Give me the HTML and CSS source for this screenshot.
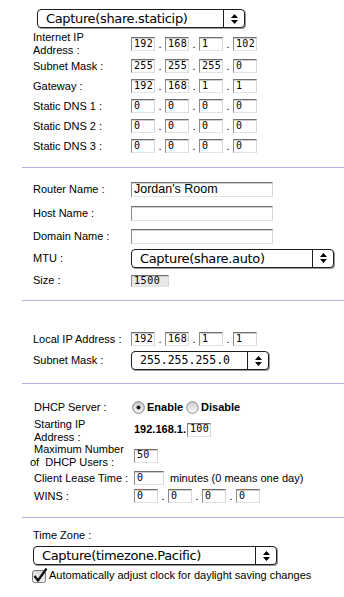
FILE: index.html
```html
<!doctype html>
<html>
<head>
<link rel="stylesheet" href="styles.css">
</head>
<body>

<div class="sec first">
	<div class="popup top-sel"><span class="val">Capture(share.staticip)</span><span class="arr"><svg width="7" height="10" viewBox="0 0 7 10"><polygon points="0,4 3.5,0 7,4"/><polygon points="0,6 3.5,10 7,6"/></svg></span></div>
	<div class="row h24 gap4">
		<div class="lbl">Internet IP<br>Address :</div>
		<div class="ip"><input class="oct" value="192"><span class="dot">.</span><input class="oct" value="168"><span class="dot">.</span><input class="oct" value="1"><span class="dot">.</span><input class="oct" value="102"></div>
	</div>
	<div class="row">
		<div class="lbl">Subnet Mask :</div>
		<div class="ip"><input class="oct" value="255"><span class="dot">.</span><input class="oct" value="255"><span class="dot">.</span><input class="oct" value="255"><span class="dot">.</span><input class="oct" value="0"></div>
	</div>
	<div class="row">
		<div class="lbl">Gateway :</div>
		<div class="ip"><input class="oct" value="192"><span class="dot">.</span><input class="oct" value="168"><span class="dot">.</span><input class="oct" value="1"><span class="dot">.</span><input class="oct" value="1"></div>
	</div>
	<div class="row">
		<div class="lbl">Static DNS 1 :</div>
		<div class="ip"><input class="oct" value="0"><span class="dot">.</span><input class="oct" value="0"><span class="dot">.</span><input class="oct" value="0"><span class="dot">.</span><input class="oct" value="0"></div>
	</div>
	<div class="row">
		<div class="lbl">Static DNS 2 :</div>
		<div class="ip"><input class="oct" value="0"><span class="dot">.</span><input class="oct" value="0"><span class="dot">.</span><input class="oct" value="0"><span class="dot">.</span><input class="oct" value="0"></div>
	</div>
	<div class="row">
		<div class="lbl">Static DNS 3 :</div>
		<div class="ip"><input class="oct" value="0"><span class="dot">.</span><input class="oct" value="0"><span class="dot">.</span><input class="oct" value="0"><span class="dot">.</span><input class="oct" value="0"></div>
	</div>
</div>

<div class="sec names">
	<div class="row h24">
		<div class="lbl">Router Name :</div>
		<input class="txt" value="Jordan's Room">
	</div>
	<div class="row h25">
		<div class="lbl">Host Name :</div>
		<input class="txt" value="">
	</div>
	<div class="row">
		<div class="lbl">Domain Name :</div>
		<input class="txt" value="">
	</div>
	<div class="row h24">
		<div class="lbl">MTU :</div>
		<div class="popup mtu-sel"><span class="val">Capture(share.auto)</span><span class="arr"><svg width="7" height="10" viewBox="0 0 7 10"><polygon points="0,4 3.5,0 7,4"/><polygon points="0,6 3.5,10 7,6"/></svg></span></div>
	</div>
	<div class="row h21">
		<div class="lbl">Size :</div>
		<input class="size" value="1500" readonly>
	</div>
</div>

<div class="sec lan">
	<div class="row">
		<div class="lbl">Local IP Address :</div>
		<div class="ip"><input class="oct" value="192"><span class="dot">.</span><input class="oct" value="168"><span class="dot">.</span><input class="oct" value="1"><span class="dot">.</span><input class="oct" value="1"></div>
	</div>
	<div class="row h23">
		<div class="lbl">Subnet Mask :</div>
		<div class="popup mask-sel"><span class="val mono">255.255.255.0</span><span class="arr"><svg width="7" height="10" viewBox="0 0 7 10"><polygon points="0,4 3.5,0 7,4"/><polygon points="0,6 3.5,10 7,6"/></svg></span></div>
	</div>
</div>

<div class="sec dhcp">
	<div class="row h22">
		<div class="lbl">DHCP Server :</div>
		<div class="radios">
			<span class="radio"><svg width="13" height="13" viewBox="0 0 13 13"><defs><linearGradient id="rg" x1="0" y1="0" x2="0" y2="1"><stop offset="0" stop-color="#c9c9c9"/><stop offset="1" stop-color="#fdfdfd"/></linearGradient></defs><circle cx="6.5" cy="6.5" r="5.8" fill="url(#rg)" stroke="#7d7d7d"/><circle cx="6.5" cy="6.5" r="2" fill="#111"/></svg></span><b>Enable</b>
			<span class="radio off"><svg width="13" height="13" viewBox="0 0 13 13"><circle cx="6.5" cy="6.5" r="5.8" fill="url(#rg)" stroke="#8a8a8a"/></svg></span><b>Disable</b>
		</div>
	</div>
	<div class="row h25">
		<div class="lbl two">Starting IP<br>Address :</div>
		<div class="start"><b>192.168.1.</b><input class="oct" value="100"></div>
	</div>
	<div class="row h25">
		<div class="lbl two">Maximum Number<br><span class="out">of&nbsp; DHCP Users :</span></div>
		<input class="oct" value="50">
	</div>
	<div class="row">
		<div class="lbl">Client Lease Time :</div>
		<input class="oct lease" value="0"><span class="note">minutes (0 means one day)</span>
	</div>
	<div class="row h16">
		<div class="lbl">WINS :</div>
		<div class="ip"><input class="oct" value="0"><span class="dot">.</span><input class="oct" value="0"><span class="dot">.</span><input class="oct" value="0"><span class="dot">.</span><input class="oct" value="0"></div>
	</div>
</div>

<div class="sec zone">
	<div class="zlbl">Time Zone :</div>
	<div class="popup tz-sel"><span class="val">Capture(timezone.Pacific)</span><span class="arr"><svg width="7" height="10" viewBox="0 0 7 10"><polygon points="0,4 3.5,0 7,4"/><polygon points="0,6 3.5,10 7,6"/></svg></span></div>
	<div class="check">
		<svg width="16" height="15" viewBox="0 0 16 15"><defs><linearGradient id="cg" x1="0" y1="0" x2="0" y2="1"><stop offset="0" stop-color="#d6d6d6"/><stop offset="1" stop-color="#f4f4f4"/></linearGradient></defs><rect x="0.5" y="2.5" width="13" height="12" rx="2" fill="url(#cg)" stroke="#7a7a7a"/><path d="M2.5 8 L6 12.5 L14.5 0.5" fill="none" stroke="#111" stroke-width="2.3" stroke-linejoin="round"/></svg>
		<span>Automatically adjust clock for daylight saving changes</span>
	</div>
</div>

</body>
</html>
```
FILE: styles.css
```css
body{
	margin:0px;
	padding:0px;
	background:#fff;
	color:#000;
	font:11px/13px "Liberation Sans", Arial, sans-serif;
	width:344px;
}

.sec{
	margin-left:22px;
	border-top:1px solid #b3b3de;
}
.first{
	border-top:none;
	padding:9px 0 11px;
}
.names{
	padding:9px 0 9px;
}
.lan{
	padding:28px 0 11px;
}
.dhcp{
	padding:12px 0 13px;
}
.zone{
	padding:11px 0 14px;
}

.row{
	display:flex;
	align-items:center;
	height:20px;
	padding-left:11px;
}
.h16{height:16px;}
.h21{height:21px;}
.h22{height:22px;}
.h23{height:23px;}
.h24{height:24px;}
.h25{height:25px;}
.gap4{margin-top:4px;}

.lbl{
	width:98px;
	flex:none;
	white-space:nowrap;
}
.dhcp .lbl{
	width:100px;
	padding-left:1px;
}
.lbl.two{
	line-height:12.5px;
}
.lbl .out{
	margin-left:-4px;
}

.ip{
	display:flex;
	align-items:center;
}
.dot{
	width:10px;
	text-align:center;
	line-height:14px;
}

input{
	margin:0;
	box-sizing:border-box;
	border-style:solid;
	border-width:1px;
	border-color:#6f6f6f #d6d6d6 #e2e2e2 #8c8c8c;
	box-shadow:inset 0 1px 0 #cfcfcf;
	background:#fff;
	color:#000;
	outline:none;
}
.oct{
	width:24px;
	height:14px;
	padding:0 0 2px 2px;
	font:10px "DejaVu Sans Mono", monospace;
	letter-spacing:0.3px;
}
.lease{
	width:30px;
}
.txt{
	width:142px;
	height:15px;
	padding:0 0 0 2px;
	font:12.5px "Liberation Sans", Arial, sans-serif;
}
.size{
	width:38px;
	height:12px;
	padding:0 0 1px 2px;
	background:#e9e9e9;
	font:10px "DejaVu Sans Mono", monospace;
	letter-spacing:0.6px;
}

.popup{
	display:flex;
	box-sizing:border-box;
	height:19px;
	border:1px solid #1e1e1e;
	border-radius:4px;
	box-shadow:1px 1px 0 #9a9a9a;
	background:#fff;
	font:13px/17px "DejaVu Sans", sans-serif;
	letter-spacing:-0.35px;
}
.popup .val{
	flex:1;
	padding-left:8px;
	white-space:nowrap;
	overflow:hidden;
}
.popup .val.mono{
	font:11.5px/17px "DejaVu Sans Mono", monospace;
	letter-spacing:0;
}
.popup .arr{
	width:20px;
	flex:none;
	border-left:1px solid #1e1e1e;
	display:flex;
	align-items:center;
	justify-content:center;
}
.popup .arr svg{
	fill:#000;
}
.top-sel{
	margin-left:15px;
	width:208px;
}
.mtu-sel{
	width:203px;
}
.mask-sel{
	width:138px;
}
.tz-sel{
	margin:4px 0 0 11px;
	width:244px;
}

.radios{
	display:flex;
	align-items:center;
	margin-left:-2px;
}
.radio{
	display:flex;
	margin-right:2px;
}
.radio.off{
	margin-left:3px;
}
.radios b{
	font-weight:bold;
}

.start{
	display:flex;
	align-items:center;
	margin-top:-2px;
}
.start b{
	margin-right:1px;
}
.note{
	margin-left:6px;
}

.zlbl{
	padding-left:11px;
}
.check{
	display:flex;
	align-items:center;
	height:15px;
	margin:3px 0 0 10px;
}
.check svg{
	margin-right:1px;
}
```
